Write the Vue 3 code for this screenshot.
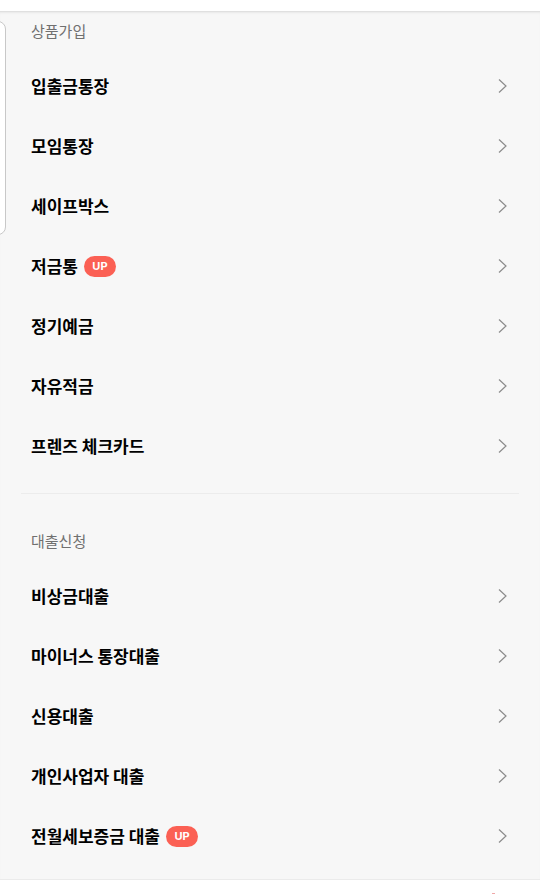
<script setup>
const sections = [
  {
    id: 'join',
    title: '상품가입',
    items: [
      { name: '입출금통장' },
      { name: '모임통장' },
      { name: '세이프박스' },
      { name: '저금통', badge: 'UP' },
      { name: '정기예금' },
      { name: '자유적금' },
      { name: '프렌즈 체크카드' }
    ]
  },
  {
    id: 'loan',
    title: '대출신청',
    items: [
      { name: '비상금대출' },
      { name: '마이너스 통장대출' },
      { name: '신용대출' },
      { name: '개인사업자 대출' },
      { name: '전월세보증금 대출', badge: 'UP' }
    ]
  }
]
</script>

<template>
  <div class="page">
    <header class="top-bar"></header>

    <main class="content">
      <!-- edge of the previous card in the swipe area -->
      <div class="side-card"></div>

      <section
        v-for="section in sections"
        :key="section.id"
        class="menu-section"
        :aria-labelledby="section.id"
      >
        <h2 :id="section.id" class="section-title">{{ section.title }}</h2>
        <ul class="menu-list">
          <li v-for="item in section.items" :key="item.name">
            <a class="menu-link" href="#" @click.prevent>
              <span class="menu-name">{{ item.name }}</span>
              <span v-if="item.badge" class="badge">{{ item.badge }}</span>
              <svg class="arrow" width="9" height="14" viewBox="0 0 9 14" aria-hidden="true">
                <path d="M1 0.5 L8 7 L1 13.5" fill="none" stroke="#8c8c8c" stroke-width="1.2" />
              </svg>
            </a>
          </li>
        </ul>
      </section>
    </main>

    <footer class="bottom-bar">
      <span class="new-dot"></span>
    </footer>
  </div>
</template>

<style>
body {
  margin: 0;
  background: #fff;
}
</style>

<style scoped>
.page {
  font-family: "Noto Sans CJK KR", sans-serif;
  background: #fff;
}

.top-bar {
  height: 11px;
  border-bottom: 1px solid #e0e0e0;
}

.content {
  position: relative;
  padding: 9px 21px 13px;
  background: #f7f7f7;
  box-shadow: inset 0 2px 2px -1px #e8e8e8;
}

.side-card {
  position: absolute;
  top: 9px;
  left: -20px;
  width: 24px;
  height: 212px;
  background: #fff;
  border: 1px solid #c8c8c8;
  border-radius: 8px;
}

.menu-section {
  padding: 0 12px 0 10px;
}

.menu-section + .menu-section {
  margin-top: 17px;
  padding-top: 37px;
  border-top: 1px solid #ececec;
}

.section-title {
  margin: 0 0 15px;
  color: #707070;
  font-size: 15px;
  font-weight: 400;
  line-height: 20px;
}

.menu-list {
  margin: 0;
  padding: 0;
  list-style: none;
}

.menu-link {
  display: flex;
  align-items: center;
  height: 60px;
  color: #000;
  text-decoration: none;
}

.menu-name {
  font-size: 17px;
  font-weight: 700;
  line-height: 24px;
}

.badge {
  min-width: 32px;
  margin-left: 6px;
  border-radius: 11px;
  background: #fb6054;
  color: #fff;
  font-family: Inter, sans-serif;
  font-size: 11px;
  font-weight: 700;
  line-height: 21px;
  text-align: center;
}

.arrow {
  margin-left: auto;
}

.bottom-bar {
  display: flex;
  justify-content: flex-end;
  padding: 13px 45px 0;
  border-top: 1px solid #ebebeb;
}

.new-dot {
  width: 3px;
  height: 1px;
  background: #f0a8a8;
}
</style>
